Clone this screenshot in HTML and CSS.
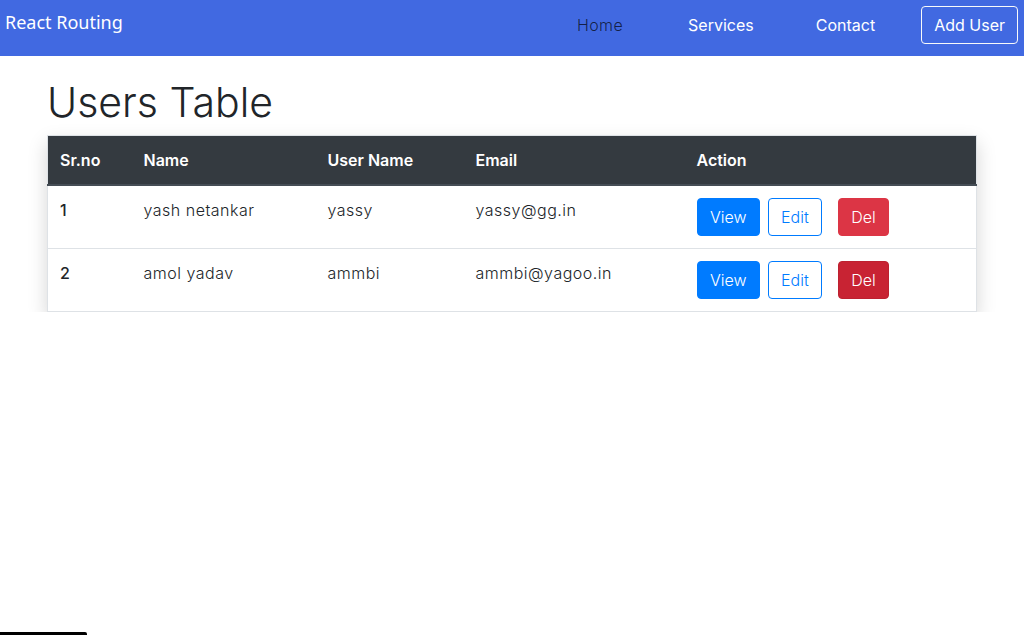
FILE: index.html
```
<!DOCTYPE html>
<html>
<head>
<meta charset="utf-8">
<link rel="stylesheet" href="styles.css">
</head>
<body>
<nav class="navbar">
  <a class="brand" href="#">React Routing</a>
  <ul class="nav-links">
    <li><a class="nav-link active" href="#">Home</a></li>
    <li><a class="nav-link" href="#">Services</a></li>
    <li><a class="nav-link" href="#">Contact</a></li>
  </ul>
  <a class="btn-outline-light" href="#">Add User</a>
</nav>
<main class="container">
  <h1 class="title">Users Table</h1>
  <table class="users-table">
    <thead>
      <tr>
        <th class="c-sr">Sr.no</th>
        <th class="c-name">Name</th>
        <th class="c-user">User Name</th>
        <th class="c-email">Email</th>
        <th class="c-action">Action</th>
      </tr>
    </thead>
    <tbody>
      <tr>
        <td class="num">1</td>
        <td>yash netankar</td>
        <td>yassy</td>
        <td>yassy@gg.in</td>
        <td><div class="actions"><a class="btn btn-primary">View</a><a class="btn btn-outline-primary">Edit</a><a class="btn btn-danger">Del</a></div></td>
      </tr>
      <tr>
        <td class="num">2</td>
        <td>amol yadav</td>
        <td>ammbi</td>
        <td>ammbi@yagoo.in</td>
        <td><div class="actions"><a class="btn btn-primary">View</a><a class="btn btn-outline-primary">Edit</a><a class="btn btn-danger hover">Del</a></div></td>
      </tr>
    </tbody>
  </table>
</main>
<div class="bottom-bar"></div>
</body>
</html>
```
FILE: styles.css
```
* { box-sizing: border-box; }
html, body { margin: 0; padding: 0; }
body {
  font-family: "Inter", "Open Sans", sans-serif;
  font-size: 16px;
  font-weight: 300;
  line-height: 1.5;
  color: #212529;
  background: #fff;
}
a { text-decoration: none; }
.navbar {
  height: 56px;
  background: #4169e1;
  display: flex;
  align-items: center;
  padding: 0 6px 0 5px;
}
.brand {
  font-family: "Noto Sans", "Open Sans", sans-serif;
  font-weight: 400;
  font-size: 18px;
  color: #fff;
  align-self: flex-start;
  padding-top: 9px;
  margin-right: auto;
}
.nav-links {
  list-style: none;
  margin: 0 0 6px;
  padding: 0;
  display: flex;
}
.nav-link {
  display: block;
  padding: 8px 31px;
  color: #fff;
  font-size: 16px;
  font-weight: 400;
}
.nav-link.active { color: rgba(0,0,0,.7); font-weight: 300; padding-left: 27px; padding-right: 34px; letter-spacing: 0.4px; }
.btn-outline-light {
  margin-left: 15px;
  margin-bottom: 6px;
  display: inline-block;
  border: 1px solid #f8f9fa;
  border-radius: 4px;
  color: #fff;
  font-weight: 400;
  padding: 6px 12px;
  font-size: 16px;
  line-height: 24px;
}
.container {
  width: 960px;
  margin: 0 auto;
  padding: 0 15px;
}
.title {
  font-size: 41px;
  font-weight: 300;
  line-height: 1.2;
  margin: 22px 0 8px;
}
.users-table {
  width: 100%;
  border-collapse: collapse;
  box-shadow: 0 8px 18px rgba(0,0,0,.17);
  border: 1px solid #dee2e6;
}
.users-table th {
  background: #343a40;
  color: #fff;
  font-weight: 600;
  text-align: left;
  padding: 12px;
  border-bottom: 2px solid #454d55;
}
.users-table td {
  padding: 12px;
  vertical-align: top;
  border-top: 1px solid #dee2e6;
  letter-spacing: 0.5px;
}
.users-table td.num { font-weight: 500; letter-spacing: 0; }
.c-sr { width: 84px; }
.c-name { width: 184px; }
.c-user { width: 148px; }
.c-email { width: 221px; }
.actions { display: flex; letter-spacing: 0; }
.btn {
  display: inline-block;
  padding: 6px 12px;
  font-size: 16px;
  line-height: 24px;
  border: 1px solid transparent;
  border-radius: 4px;
  font-weight: 300;
}
.btn-primary { background: #007bff; border-color: #007bff; color: #fff; margin-right: 8px; padding: 6px 12.5px; }
.btn-outline-primary { color: #007bff; border-color: #007bff; margin-right: 16px; }
.btn-danger { background: #dc3545; border-color: #dc3545; color: #fff; padding: 6px 12.5px; }
.btn-danger.hover { background: #c82333; border-color: #bd2130; }
.bottom-bar {
  position: fixed;
  left: 0;
  bottom: 0;
  width: 87px;
  height: 3px;
  background: #000;
  border-top-right-radius: 2px;
}
```
